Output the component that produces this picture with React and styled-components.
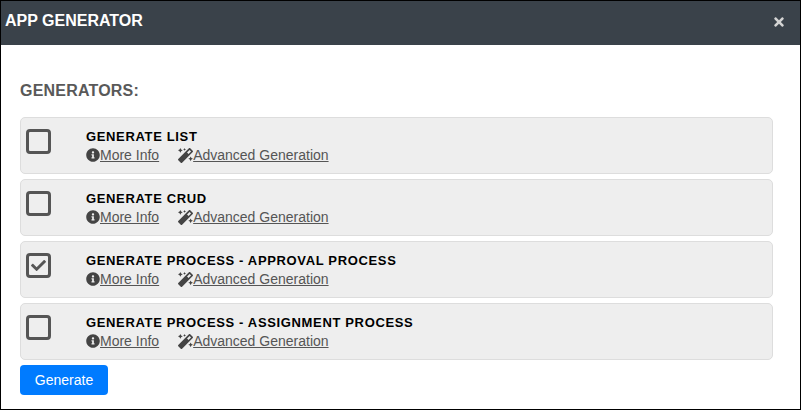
import React from "react";
import styled, { createGlobalStyle } from "styled-components";
import { FaInfoCircle, FaMagic, FaTimes, FaCheck } from "react-icons/fa";

const Global = createGlobalStyle`
  html, body { margin: 0; padding: 0; background: #fff; }
  body { font-family: "Liberation Sans", Arial, sans-serif; }
`;

const Modal = styled.div`
  box-sizing: border-box;
  width: 801px;
  height: 410px;
  border: 1px solid #000;
  display: flex;
  flex-direction: column;
  background: #fff;
`;

const Header = styled.header`
  height: 44px;
  flex: none;
  background: #3a424a;
  display: flex;
  justify-content: space-between;
  padding: 10px 14px 0 4px;
  box-sizing: border-box;
`;

const Title = styled.h1`
  margin: 0;
  font-size: 16px;
  line-height: 19px;
  font-weight: 700;
  color: #fff;
`;

const Close = styled.span`
  color: #d4d4d4;
  font-size: 14px;
  line-height: 1;
  margin-top: 4px;
  display: flex;
`;

const Body = styled.main`
  padding: 37px 27px 0 19px;
  display: flex;
  flex-direction: column;
`;

const Heading = styled.h2`
  margin: 0 0 17px;
  font-size: 16px;
  line-height: 18px;
  font-weight: 700;
  letter-spacing: 0.2px;
  color: #595959;
`;

const List = styled.div`
  display: flex;
  flex-direction: column;
  gap: 5px;
`;

const Row = styled.div`
  box-sizing: border-box;
  height: 57px;
  background: #eee;
  border: 1px solid #ddd;
  border-radius: 5px;
  display: flex;
  padding: 11px 0 0 5px;
`;

const Check = styled.span`
  box-sizing: border-box;
  width: 25px;
  height: 25px;
  flex: none;
  border: 3px solid #555;
  border-radius: 4px;
  color: #555;
  font-size: 15px;
  display: flex;
  align-items: center;
  justify-content: center;
`;

const Info = styled.div`
  margin-left: 35px;
  display: flex;
  flex-direction: column;
`;

const RowTitle = styled.div`
  font-size: 13px;
  line-height: 15px;
  font-weight: 700;
  letter-spacing: 0.65px;
  color: #000;
`;

const Links = styled.div`
  display: flex;
  gap: 19px;
  margin-top: 3px;
`;

const LinkItem = styled.a`
  display: flex;
  align-items: center;
  font-size: 14px;
  line-height: 16px;
  color: #555;
  text-decoration: underline;
  svg { color: #444; width: ${(p) => p.$iconSize}px; height: ${(p) => p.$iconSize}px; flex: none; }
`;

const GenerateButton = styled.button`
  box-sizing: border-box;
  align-self: flex-start;
  width: 88px;
  height: 30px;
  margin-top: 5px;
  border: none;
  border-radius: 4px;
  background: #007bff;
  color: #fff;
  font-family: inherit;
  font-size: 14px;
  padding: 0;
`;

const items = [
  { name: "GENERATE LIST", checked: false },
  { name: "GENERATE CRUD", checked: false },
  { name: "GENERATE PROCESS - APPROVAL PROCESS", checked: true },
  { name: "GENERATE PROCESS - ASSIGNMENT PROCESS", checked: false },
];

export default function App() {
  return (
    <>
      <Global />
      <Modal>
        <Header>
          <Title>APP GENERATOR</Title>
          <Close><FaTimes /></Close>
        </Header>
        <Body>
          <Heading>GENERATORS:</Heading>
          <List>
            {items.map((item) => (
              <Row key={item.name}>
                <Check>{item.checked && <FaCheck />}</Check>
                <Info>
                  <RowTitle>{item.name}</RowTitle>
                  <Links>
                    <LinkItem $iconSize={14}><FaInfoCircle />More Info</LinkItem>
                    <LinkItem $iconSize={15}><FaMagic />Advanced Generation</LinkItem>
                  </Links>
                </Info>
              </Row>
            ))}
          </List>
          <GenerateButton>Generate</GenerateButton>
        </Body>
      </Modal>
    </>
  );
}
